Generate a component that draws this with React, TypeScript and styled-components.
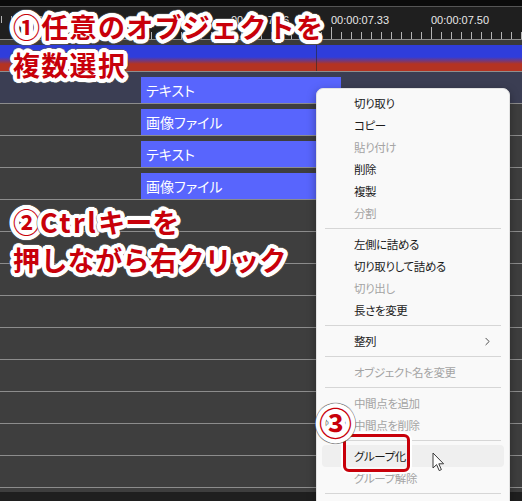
import styled, { createGlobalStyle } from "styled-components";
import { ChevronRight } from "lucide-react";

const GlobalStyle = createGlobalStyle`
  html, body { margin: 0; padding: 0; background: #1f1f1f; }
  body { font-family: "Noto Sans CJK JP", "Noto Sans", sans-serif; }
`;

const ring = (r: number, color: string, steps = 24) => {
  const parts: string[] = [];
  for (let i = 0; i < steps; i++) {
    const a = (i / steps) * Math.PI * 2;
    parts.push(`${(Math.cos(a) * r).toFixed(2)}px ${(Math.sin(a) * r).toFixed(2)}px 0 ${color}`);
  }
  return parts.join(", ");
};

const OUTLINE = [ring(1.5, "#fff", 12), ring(3, "#fff"), ring(4, "#fff"), ring(5, "rgba(90,90,90,0.35)")].join(", ");

const Screen = styled.div`
  position: relative;
  width: 522px;
  height: 501px;
  overflow: hidden;
  display: flex;
  flex-direction: column;
  background: #3e3e3e;
`;

const TopEdge = styled.div`
  height: 6px;
  background: #0b0b0b;
  border-bottom: 1px solid #555;
`;

const Ruler = styled.div`
  height: 32px;
  background: #1f1f1f;
  border-bottom: 1px solid #8f8f8f;
  display: flex;
`;

const Segment = styled.div<{ $lead?: boolean }>`
  flex: 0 0 ${({ $lead }) => ($lead ? "31px" : "100px")};
  display: flex;
  flex-direction: column;
  justify-content: space-between;
`;

const TimeLabel = styled.span`
  font-family: "Liberation Sans", Arial, sans-serif;
  font-size: 11px;
  line-height: 13px;
  color: #e8e8e8;
  margin-top: 7px;
  white-space: nowrap;
`;

const Ticks = styled.div<{ $lead?: boolean }>`
  height: 16px;
  background: ${({ $lead }) =>
    $lead
      ? "repeating-linear-gradient(to right, #b4b4b4 0 1px, transparent 1px 10px) 1px bottom / 100% 7px no-repeat"
      : `linear-gradient(#b4b4b4, #b4b4b4) left bottom / 1px 16px no-repeat,
         repeating-linear-gradient(to right, #b4b4b4 0 1px, transparent 1px 10px) left bottom / 100% 7px no-repeat`};
`;

const Gap = styled.div`
  height: 5px;
  background: #3a3a3a;
`;

const Band = styled.div`
  position: relative;
  height: 26px;
  border-bottom: 1px solid #8f8f8f;
  background: linear-gradient(to bottom, #2f3ddb 0, #2f3ddb 12px, #b43322 19px, #b43322 100%);
`;

const Playhead = styled.div`
  position: absolute;
  left: 316px;
  top: 0;
  bottom: 0;
  width: 1px;
  background: rgba(40, 40, 40, 0.6);
`;

const Tracks = styled.div`
  flex: 1;
  display: flex;
  flex-direction: column;
  overflow: hidden;
`;

const Row = styled.div<{ $first?: boolean }>`
  flex: 0 0 32px;
  box-sizing: border-box;
  border-bottom: 1px solid #8c8c8c;
  background: ${({ $first }) => ($first ? "#3b3e53" : "#3e3e3e")};
  padding-top: 5px;
  display: flex;
`;

const Clip = styled.div`
  margin-left: 141px;
  width: 200px;
  height: 26px;
  background: #5865fd;
  color: #fff;
  font-size: 14px;
  line-height: 26px;
  padding-left: 5px;
  box-sizing: border-box;
  font-feature-settings: "palt";
  white-space: nowrap;
`;

const BottomBar = styled.div`
  height: 9px;
  background: #1f1f1f;
`;

const Menu = styled.div`
  position: absolute;
  left: 316px;
  top: 88px;
  width: 194px;
  box-sizing: border-box;
  padding: 3px 0 20px;
  background: #f9f9f9;
  border: 1px solid #e2e2e2;
  border-radius: 7px;
  box-shadow: 0 3px 10px rgba(0, 0, 0, 0.35);
`;

const Item = styled.div<{ $disabled?: boolean; $hover?: boolean }>`
  height: 22px;
  margin: 0 5px;
  padding: 0 10px 0 32px;
  display: flex;
  align-items: center;
  justify-content: space-between;
  border-radius: 4px;
  font-size: 11.5px;
  letter-spacing: -0.4px;
  font-feature-settings: "palt";
  color: ${({ $disabled }) => ($disabled ? "#a4a4a4" : "#1b1b1b")};
  background: ${({ $hover }) => ($hover ? "#efefef" : "transparent")};
  white-space: nowrap;
`;

const Separator = styled.div`
  height: 1px;
  margin: 4px 8px;
  background: #d6d6d6;
`;

const Callout = styled.div<{ $top: number; $left: number; $size: number }>`
  position: absolute;
  top: ${({ $top }) => $top}px;
  left: ${({ $left }) => $left}px;
  font-size: ${({ $size }) => $size}px;
  line-height: 38px;
  font-weight: 700;
  color: #c8000a;
  text-shadow: ${OUTLINE};
  white-space: nowrap;
`;

const CalloutLine = styled.div<{ $spacing?: number }>`
  letter-spacing: ${({ $spacing }) => $spacing ?? 0}px;
`;

const Wide = styled.span`
  letter-spacing: 2.5px;
`;

const Highlight = styled.div`
  position: absolute;
  left: 343px;
  top: 434px;
  width: 67px;
  height: 38px;
  box-sizing: border-box;
  border: 3px solid #c8000a;
  border-radius: 6px;
  box-shadow: 0 0 0 2px #fff;
`;

const Pointer = styled.svg`
  position: absolute;
  left: 432px;
  top: 452px;
`;

type MenuEntry = { label: string; disabled?: boolean; hover?: boolean; sub?: boolean } | "sep";

const menu: MenuEntry[] = [
  { label: "切り取り" },
  { label: "コピー" },
  { label: "貼り付け", disabled: true },
  { label: "削除" },
  { label: "複製" },
  { label: "分割", disabled: true },
  "sep",
  { label: "左側に詰める" },
  { label: "切り取りして詰める" },
  { label: "切り出し", disabled: true },
  { label: "長さを変更" },
  "sep",
  { label: "整列", sub: true },
  "sep",
  { label: "オブジェクト名を変更", disabled: true },
  "sep",
  { label: "中間点を追加", disabled: true },
  { label: "中間点を削除", disabled: true },
  "sep",
  { label: "グループ化", hover: true },
  { label: "グループ解除", disabled: true },
  "sep",
];

const times = ["00:00:06.83", "00:00:07.00", "00:00:07.16", "00:00:07.33", "00:00:07.50"];
const clips = ["テキスト", "画像ファイル", "テキスト", "画像ファイル"];

export default function App() {
  return (
    <>
      <GlobalStyle />
      <Screen>
        <TopEdge />
        <Ruler>
          <Segment $lead>
            <Ticks $lead />
          </Segment>
          {times.map((t) => (
            <Segment key={t}>
              <TimeLabel>{t}</TimeLabel>
              <Ticks />
            </Segment>
          ))}
        </Ruler>
        <Gap />
        <Band>
          <Playhead />
        </Band>
        <Tracks>
          {Array.from({ length: 14 }).map((_, i) => (
            <Row key={i} $first={i === 0}>
              {clips[i] && <Clip>{clips[i]}</Clip>}
            </Row>
          ))}
        </Tracks>
        <BottomBar />

        <Menu>
          {menu.map((m, i) =>
            m === "sep" ? (
              <Separator key={i} />
            ) : (
              <Item key={i} $disabled={m.disabled} $hover={m.hover}>
                <span>{m.label}</span>
                {m.sub && <ChevronRight size={13} strokeWidth={1.6} color="#333" />}
              </Item>
            )
          )}
        </Menu>

        <Callout $top={8} $left={13} $size={27}>
          <CalloutLine $spacing={1.3}>①任意のオブジェクトを</CalloutLine>
          <CalloutLine $spacing={1.3}>複数選択</CalloutLine>
        </Callout>

        <Callout $top={203} $left={13} $size={27}>
          <CalloutLine>
            ②<Wide>Ctrl</Wide>キーを
          </CalloutLine>
          <CalloutLine $spacing={0.4}>押しながら右クリック</CalloutLine>
        </Callout>

        <Highlight />
        <Callout $top={403} $left={319} $size={33}>
          <CalloutLine>③</CalloutLine>
        </Callout>

        <Pointer width="13" height="20" viewBox="0 0 13 20">
          <path d="M1 1 L1 16 L4.6 12.6 L7.2 18.6 L9.4 17.6 L6.8 11.8 L11.6 11.8 Z" fill="#fff" stroke="#3a3a3a" strokeWidth="1" strokeLinejoin="round" />
        </Pointer>
      </Screen>
    </>
  );
}
